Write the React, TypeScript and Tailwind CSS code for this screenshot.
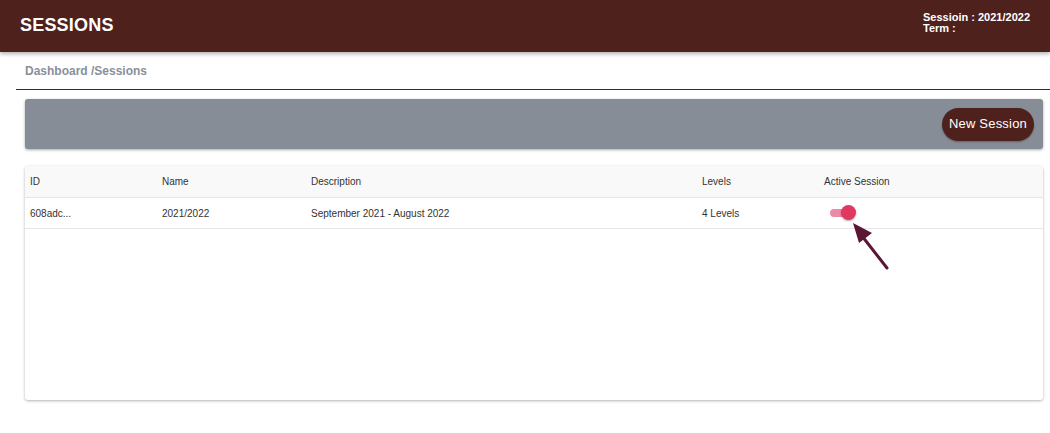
import React from "react";

type Session = {
  id: string;
  name: string;
  description: string;
  levels: string;
  active: boolean;
};

const sessions: Session[] = [
  { id: "608adc...", name: "2021/2022", description: "September 2021 - August 2022", levels: "4 Levels", active: true },
];

function Toggle({ on }: { on: boolean }) {
  return (
    <div className="relative w-[30px] h-[16px] flex items-center">
      <div className={`w-[22px] h-[8px] ml-[2px] rounded-full ${on ? "bg-[#ec8aa8]" : "bg-gray-300"}`} />
      <div
        className={`absolute top-0 w-[15px] h-[15px] rounded-full shadow-[0_1px_2px_rgba(0,0,0,0.35)] ${on ? "left-[13px] bg-[#e0385f]" : "left-0 bg-white"}`}
      />
    </div>
  );
}

function Arrow() {
  return (
    <svg className="absolute left-[842px] top-[216px]" width="54" height="58" viewBox="0 0 54 58">
      <line x1="45" y1="52" x2="20" y2="20" stroke="#5a1634" strokeWidth="3" strokeLinecap="round" />
      <polygon points="11,7 30,17 17,27" fill="#5a1634" />
    </svg>
  );
}

export default function App() {
  const headers = ["ID", "Name", "Description", "Levels", "Active Session"];
  const widths = ["w-[132px]", "w-[149px]", "w-[391px]", "w-[122px]", "flex-1"];

  return (
    <div className="relative w-[1050px] h-[433px] bg-white overflow-hidden" style={{ fontFamily: '"Liberation Sans", Arial, sans-serif' }}>
      <header className="h-[52px] bg-[#4f211c] flex items-start justify-between pl-[20px] pr-[20px] shadow-[0_2px_4px_rgba(0,0,0,0.3)] relative z-10">
        <h1 className="text-white text-[18px] font-bold tracking-[0.2px] mt-[12px]">SESSIONS</h1>
        <div className="text-white text-[11px] font-bold leading-[11px] mt-[12px]">
          <div>Sessioin : 2021/2022</div>
          <div>Term :</div>
        </div>
      </header>

      <div className="pl-[25px] pt-[10px] h-[37px] text-[12px] font-bold text-[#8a8f99]">Dashboard /Sessions</div>
      <div className="ml-[16px] h-px bg-[#4f211c]" />

      <div className="px-[25px] pt-[9px] pr-[7px]">
        <div className="h-[50px] rounded-[3px] bg-[#878d96] shadow-[0_1px_3px_rgba(0,0,0,0.35)] flex items-center justify-end pr-[9px]">
          <button className="h-[33px] px-[7px] rounded-full bg-[#4f211c] text-white text-[13px] tracking-[0.2px] shadow-[0_1px_2px_rgba(0,0,0,0.3)]">
            New Session
          </button>
        </div>

        <div className="mt-[17px] h-[234px] rounded-[3px] bg-white shadow-[0_1px_3px_rgba(0,0,0,0.3)] overflow-hidden">
          <div className="h-[32px] bg-[#f9f9f9] border-b border-[#e6e6e6] flex items-center pl-[5px] text-[10px] text-[#333]">
            {headers.map((h, i) => (
              <div key={h} className={widths[i]}>{h}</div>
            ))}
          </div>
          {sessions.map((s) => (
            <div key={s.id} className="h-[31px] border-b border-[#e6e6e6] flex items-center pl-[5px] text-[10px] text-[#333]">
              <div className={widths[0]}>{s.id}</div>
              <div className={widths[1]}>{s.name}</div>
              <div className={widths[2]}>{s.description}</div>
              <div className={widths[3]}>{s.levels}</div>
              <div className="flex-1 pl-[4px]"><Toggle on={s.active} /></div>
            </div>
          ))}
        </div>
      </div>

      <Arrow />
    </div>
  );
}
